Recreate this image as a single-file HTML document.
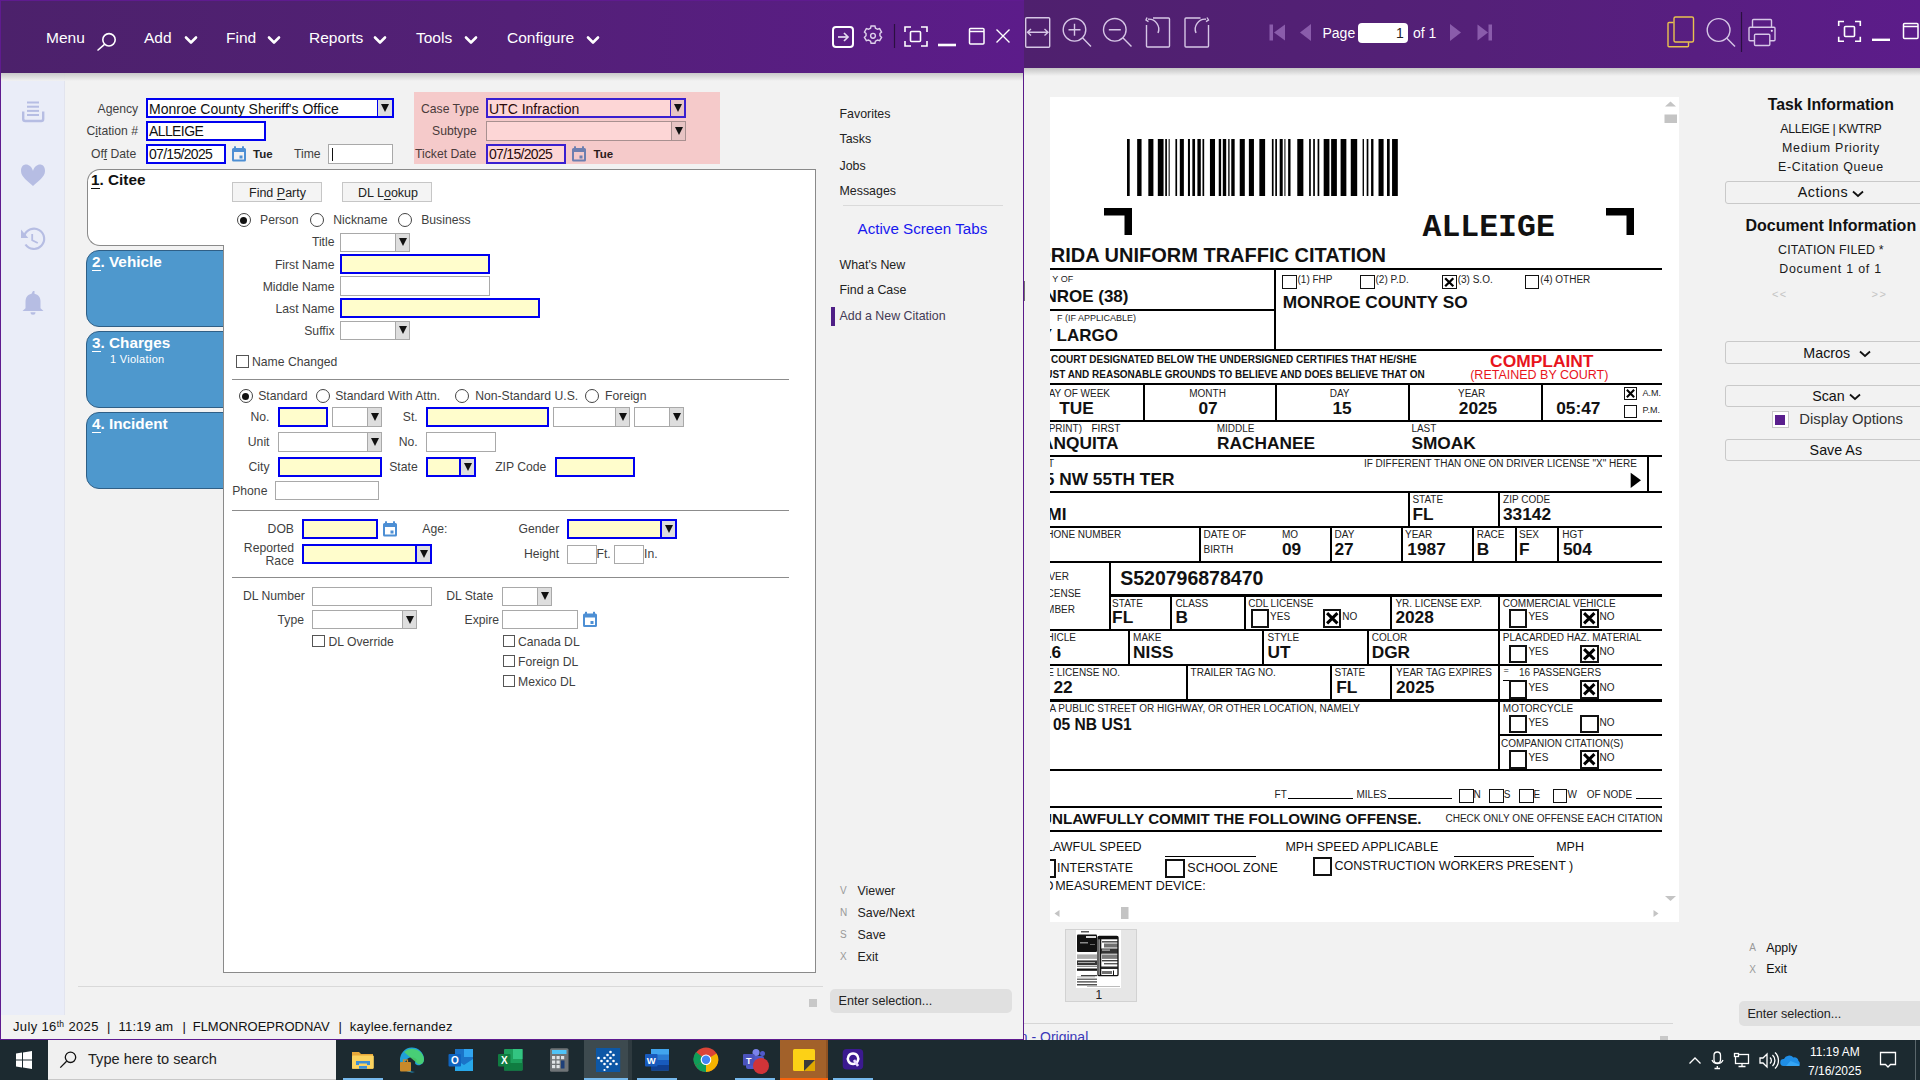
<!DOCTYPE html>
<html><head><meta charset="utf-8">
<style>
*{margin:0;padding:0;box-sizing:border-box}
html,body{width:1920px;height:1080px;overflow:hidden;background:#f2f2f2;font-family:"Liberation Sans",sans-serif}
.a{position:absolute}
.t{position:absolute;white-space:nowrap;line-height:1}
svg{position:absolute;overflow:visible}
/* header */
#lh{left:0;top:0;width:1024px;height:73px;background:linear-gradient(90deg,#4c216b 0%,#532077 50%,#5c1c8a 100%)}
#rh{left:1024px;top:0;width:896px;height:68px;background:linear-gradient(90deg,#4f206e 0%,#542078 50%,#5c1c8a 100%)}
.mi{color:#fff;font-size:15.5px}
.shadow{background:linear-gradient(#c4c4c4,#f2f2f2)}

.lbl{color:#3f3f3f;font-size:12.2px}
.inp{position:absolute;background:#fff;border:1px solid #a9a9a9}
.req{background:#fffdcc;border:2px solid #0000f0}
.blu{border:2px solid #0000f0}
.dd{position:absolute;top:0;bottom:0;right:0;width:14px;background:#dedede;border-left:1px solid #a9a9a9}
.dd::after{content:"";position:absolute;left:3px;top:50%;margin-top:-4px;border-left:4px solid transparent;border-right:4px solid transparent;border-top:8px solid #111}
.itx{position:absolute;left:1px;color:#111;font-size:14px;line-height:1}
.tab{position:absolute;left:86px;width:140px;height:77px;background:#4e98cd;border:1px solid #2f5f86;border-radius:13px 0 0 13px}
.tabt{position:absolute;left:5px;top:2.5px;color:#fff;font-size:15.3px;font-weight:bold;line-height:1}
.tabt u{text-decoration:none;border-bottom:1.2px solid currentColor}
.cb{position:absolute;width:13px;height:13px;border:1px solid #555;background:#fff}
.rd{position:absolute;width:14px;height:14px;border:1px solid #444;border-radius:50%;background:#fff}
.rd.on::after{content:"";position:absolute;left:2.5px;top:2.5px;width:7px;height:7px;border-radius:50%;background:#111}
.lk{color:#222;font-size:12.4px}
.btn{position:absolute;background:#f4f4f4;border:1px solid #c6c6c6}
.hr{position:absolute;height:1px;background:#8c8c8c}

.rbtn{position:absolute;left:1725px;width:200px;background:#f2f2f2;border:1px solid #c9c9c9;border-radius:3px}
.rp{color:#1a1a1a;font-size:12.4px}
</style></head><body>
<!-- LEFT WINDOW -->
<div class="a" id="lh"></div>
<div class="a" style="left:0;top:0;width:1px;height:1040px;background:#5f1b8f"></div>
<div class="a" style="left:0;top:0;width:1024px;height:1px;background:#5f1b8f"></div>
<div class="a" style="left:1023px;top:68px;width:1px;height:972px;background:#5a1b8a"></div>
<div class="a" style="left:0;top:1039px;width:1024px;height:1px;background:#5f1b8f"></div>

<!-- left body -->
<div class="a" style="left:1px;top:73px;width:64px;height:942px;background:#eaedf8;border-right:1px solid #e2e4ee"></div>
<div class="a shadow" style="left:1px;top:73px;width:1022px;height:8px;opacity:.9"></div>
<svg style="left:0;top:0" width="1" height="1">
<g fill="#b6bde3">
<rect x="27" y="101.5" width="12" height="2"/><rect x="27" y="105.7" width="12" height="2"/><rect x="27" y="109.9" width="12" height="2"/><rect x="27" y="114" width="12" height="2"/>
<path d="M33,171 C31,163 21,162 21,171 C21,177 28,181 33,186 C38,181 45,177 45,171 C45,162 35,163 33,171 Z"/>
<path d="M33,291 h1.5 v2.8 c4,0.8 6,3.6 6,8 v6.5 l3,2.6 h-21 l3,-2.6 v-6.5 c0,-4.4 2,-7.2 6,-8 z M30.5,312.2 h5 a2.5,2.5 0 0 1 -5,0 z"/>
<polygon points="21,229.5 28.3,238 21,238"/>
</g>
<g fill="none" stroke="#b6bde3">
<path d="M23.2,111.5 v7.5 a2,2 0 0 0 2,2 h16 a2,2 0 0 0 2,-2 v-7.5" stroke-width="2.4"/>
<path d="M24.3,235.5 A10.2,10.2 0 1 1 25.5,244.5" stroke-width="2.2"/>
<path d="M32.2,234 V240.2 L37.8,243" stroke-width="1.8"/>
</g>
</svg>

<!-- top form -->
<div class="t lbl" style="left:97.5px;top:102.5px">A<u style="text-decoration-thickness:1px">g</u>ency</div>
<div class="inp blu" style="left:146px;top:98px;width:248px;height:20px"><div class="itx" style="top:2px">Monroe County Sheriff's Office</div><div class="dd" style="border-left-color:#0000f0;width:15px"></div></div>
<div class="t lbl" style="left:86.5px;top:125px">C<u style="text-decoration-thickness:1px">i</u>tation #</div>
<div class="inp blu" style="left:146px;top:121px;width:120px;height:20px"><div class="itx" style="top:0.5px;letter-spacing:-0.6px">ALLEIGE</div></div>
<div class="t lbl" style="left:91px;top:148px">Of<u style="text-decoration-thickness:1px">f</u> Date</div>
<div class="inp blu" style="left:146px;top:144px;width:80px;height:20px"><div class="itx" style="top:0.5px;letter-spacing:-0.7px">07/15/2025</div></div>
<svg style="left:0;top:0" width="1" height="1"><g fill="#4d8fd4"><path d="M233.5,148 h11 a1.5,1.5 0 0 1 1.5,1.5 v10.5 a1.5,1.5 0 0 1 -1.5,1.5 h-11 a1.5,1.5 0 0 1 -1.5,-1.5 v-10.5 a1.5,1.5 0 0 1 1.5,-1.5 z M234,152 v7.5 h10 v-7.5 z"/><rect x="234" y="146.3" width="2" height="3"/><rect x="242" y="146.3" width="2" height="3"/><rect x="239.5" y="155.5" width="3" height="3"/></g>
</svg>
<div class="t" style="left:253px;top:148.5px;font-size:11.5px;font-weight:bold;color:#222">Tue</div>
<div class="t lbl" style="left:294px;top:148px">Time</div>
<div class="inp" style="left:328px;top:144px;width:65px;height:20px"><div class="a" style="left:3px;top:3px;width:1px;height:13px;background:#111"></div></div>

<div class="a" style="left:414px;top:92px;width:306px;height:72px;background:#f5caca"></div>
<div class="t lbl" style="left:421px;top:102.5px;color:#4a3a3a">Case Type</div>
<div class="inp" style="left:486px;top:98px;width:200px;height:20px;background:#fdd6d6;border:2px solid #3a1fd0"><div class="itx" style="top:2px;color:#2a0a0a">UTC Infraction</div><div class="dd" style="background:#e8c4c4;border-left-color:#3a1fd0"></div></div>
<div class="t lbl" style="left:432px;top:125px;color:#4a3a3a">Subtype</div>
<div class="inp" style="left:486px;top:121px;width:200px;height:20px;background:#fdd6d6;border-color:#a89090"><div class="dd" style="background:#e8c4c4;border-left-color:#a89090"></div></div>
<div class="t lbl" style="left:415px;top:148px;color:#4a3a3a">Ticket Date</div>
<div class="inp" style="left:486px;top:144px;width:80px;height:20px;background:#fdd6d6;border:2px solid #3a1fd0"><div class="itx" style="top:0.5px;color:#2a0a0a;letter-spacing:-0.7px">07/15/2025</div></div>
<svg style="left:0;top:0" width="1" height="1"><g fill="#6d7fb0"><path d="M573.5,148 h11 a1.5,1.5 0 0 1 1.5,1.5 v10.5 a1.5,1.5 0 0 1 -1.5,1.5 h-11 a1.5,1.5 0 0 1 -1.5,-1.5 v-10.5 a1.5,1.5 0 0 1 1.5,-1.5 z M574,152 v7.5 h10 v-7.5 z"/><rect x="574" y="146.3" width="2" height="3"/><rect x="582" y="146.3" width="2" height="3"/><rect x="579.5" y="155.5" width="3" height="3"/></g></svg>
<div class="t" style="left:593.5px;top:148.5px;font-size:11.5px;font-weight:bold;color:#2a1a1a">Tue</div>

<!-- tabs -->
<div class="tab" style="top:250px"><div class="tabt"><u>2</u>. Vehicle</div></div>
<div class="tab" style="top:331px"><div class="tabt"><u>3</u>. Charges</div><div class="t" style="left:23px;top:22px;color:#fff;font-size:11px;letter-spacing:0.3px">1 Violation</div></div>
<div class="tab" style="top:412px"><div class="tabt"><u>4</u>. Incident</div></div>
<div class="a" style="left:223px;top:169px;width:593px;height:804px;background:#fff;border:1px solid #8a8a8a"></div>
<div class="a" style="left:87px;top:169px;width:137px;height:77px;background:#fff;border:1px solid #8a8a8a;border-right:none;border-radius:13px 0 0 13px"></div>
<div class="tabt" style="position:absolute;left:91px;top:172px;color:#111"><u>1</u>. Citee</div>


<!-- citee form -->
<div class="btn" style="left:232px;top:182px;width:90px;height:20px"></div>
<div class="t" style="left:249px;top:186.5px;color:#222;font-size:12.5px">Find <u style="text-decoration-thickness:1px;text-underline-offset:2px">P</u>arty</div>
<div class="btn" style="left:342px;top:182px;width:90px;height:20px"></div>
<div class="t" style="left:358px;top:186.5px;color:#222;font-size:12.5px">DL L<u style="text-decoration-thickness:1px;text-underline-offset:2px">o</u>okup</div>
<div class="rd on" style="left:236.5px;top:213px"></div><div class="t lbl" style="left:260px;top:213.5px">Person</div>
<div class="rd" style="left:309.5px;top:213px"></div><div class="t lbl" style="left:333.3px;top:213.5px">Nickname</div>
<div class="rd" style="left:397.5px;top:213px"></div><div class="t lbl" style="left:421.2px;top:213.5px">Business</div>
<div class="t lbl" style="right:1585.5px;top:236px">Title</div>
<div class="inp" style="left:340px;top:232.5px;width:70px;height:19px"><div class="dd"></div></div>
<div class="t lbl" style="right:1585.5px;top:258.5px">First Name</div>
<div class="inp req" style="left:340px;top:254px;width:150px;height:20px"></div>
<div class="t lbl" style="right:1585.5px;top:280.5px">Middle Name</div>
<div class="inp" style="left:340px;top:276px;width:150px;height:20px"></div>
<div class="t lbl" style="right:1585.5px;top:302.5px">Last Name</div>
<div class="inp req" style="left:340px;top:298px;width:200px;height:20px"></div>
<div class="t lbl" style="right:1585.5px;top:324.5px">Suffix</div>
<div class="inp" style="left:340px;top:320.5px;width:70px;height:19px"><div class="dd"></div></div>
<div class="cb" style="left:236px;top:355px"></div><div class="t lbl" style="left:252px;top:356px">Name Changed</div>
<div class="hr" style="left:232px;top:379px;width:557px"></div>

<div class="rd on" style="left:238.5px;top:389.3px"></div><div class="t lbl" style="left:258.2px;top:389.8px">Standard</div>
<div class="rd" style="left:315.5px;top:389.3px"></div><div class="t lbl" style="left:335.2px;top:389.8px">Standard With Attn.</div>
<div class="rd" style="left:455px;top:389.3px"></div><div class="t lbl" style="left:475.2px;top:389.8px">Non-Standard U.S.</div>
<div class="rd" style="left:585.3px;top:389.3px"></div><div class="t lbl" style="left:605.1px;top:389.8px">Foreign</div>
<div class="t lbl" style="right:1650.5px;top:411px">No.</div>
<div class="inp req" style="left:278px;top:407px;width:50px;height:20px"></div>
<div class="inp" style="left:332px;top:407px;width:50px;height:20px"><div class="dd"></div></div>
<div class="t lbl" style="right:1502.3px;top:411px">St.</div>
<div class="inp req" style="left:426px;top:407px;width:123px;height:20px"></div>
<div class="inp" style="left:553px;top:407px;width:77px;height:20px"><div class="dd"></div></div>
<div class="inp" style="left:634px;top:407px;width:50px;height:20px"><div class="dd"></div></div>
<div class="t lbl" style="right:1650.5px;top:436px">Unit</div>
<div class="inp" style="left:278px;top:432px;width:104px;height:20px"><div class="dd"></div></div>
<div class="t lbl" style="right:1502.3px;top:436px">No.</div>
<div class="inp" style="left:426px;top:432px;width:70px;height:20px"></div>
<div class="t lbl" style="right:1650.5px;top:460.5px">City</div>
<div class="inp req" style="left:278px;top:456.5px;width:104px;height:20px"></div>
<div class="t lbl" style="right:1502.3px;top:460.5px">State</div>
<div class="inp req" style="left:426px;top:456.5px;width:50px;height:20px"><div class="dd" style="border-left:2px solid #0000f0;width:15px"></div></div>
<div class="t lbl" style="right:1373.6px;top:460.5px">ZIP Code</div>
<div class="inp req" style="left:555px;top:456.5px;width:80px;height:20px"></div>
<div class="t lbl" style="left:232.2px;top:484.5px">Phone</div>
<div class="inp" style="left:275px;top:480.5px;width:104px;height:19.5px"></div>
<div class="hr" style="left:232px;top:509.5px;width:557px"></div>

<div class="t lbl" style="right:1626px;top:523px">DOB</div>
<div class="inp req" style="left:302px;top:519px;width:76px;height:20px"></div>
<svg style="left:0;top:0" width="1" height="1"><g fill="#4d8fd4"><path d="M384.5,523 h11 a1.5,1.5 0 0 1 1.5,1.5 v10.5 a1.5,1.5 0 0 1 -1.5,1.5 h-11 a1.5,1.5 0 0 1 -1.5,-1.5 v-10.5 a1.5,1.5 0 0 1 1.5,-1.5 z M385,527 v7.5 h10 v-7.5 z"/><rect x="385" y="521.3" width="2" height="3"/><rect x="393" y="521.3" width="2" height="3"/><rect x="390.5" y="530.5" width="3" height="3"/></g>
<g fill="#4d8fd4"><path d="M584.5,613.5 h11 a1.5,1.5 0 0 1 1.5,1.5 v10.5 a1.5,1.5 0 0 1 -1.5,1.5 h-11 a1.5,1.5 0 0 1 -1.5,-1.5 v-10.5 a1.5,1.5 0 0 1 1.5,-1.5 z M585,617.5 v7.5 h10 v-7.5 z"/><rect x="585" y="611.8" width="2" height="3"/><rect x="593" y="611.8" width="2" height="3"/><rect x="590.5" y="621" width="3" height="3"/></g></svg>
<div class="t lbl" style="left:422.3px;top:523px">Age:</div>
<div class="t lbl" style="right:1360.8px;top:523px">Gender</div>
<div class="inp req" style="left:567px;top:519px;width:110px;height:20px"><div class="dd" style="border-left:2px solid #0000f0;width:15px"></div></div>
<div class="t lbl" style="right:1626px;top:541.5px">Reported</div>
<div class="t lbl" style="right:1626px;top:555.3px">Race</div>
<div class="inp req" style="left:302px;top:544px;width:130px;height:20px"><div class="dd" style="border-left:2px solid #0000f0;width:15px"></div></div>
<div class="t lbl" style="right:1360.8px;top:548px">Height</div>
<div class="inp" style="left:567px;top:544.5px;width:30px;height:19.5px"></div>
<div class="t lbl" style="left:596.5px;top:548px">Ft.</div>
<div class="inp" style="left:614px;top:544.5px;width:30px;height:19.5px"></div>
<div class="t lbl" style="left:644px;top:548px">In.</div>
<div class="hr" style="left:232px;top:576.5px;width:557px"></div>

<div class="t lbl" style="left:243px;top:590px">DL Number</div>
<div class="inp" style="left:312px;top:586.5px;width:120px;height:19px"></div>
<div class="t lbl" style="left:446.2px;top:590px">DL State</div>
<div class="inp" style="left:502px;top:586.5px;width:50px;height:19px"><div class="dd"></div></div>
<div class="t lbl" style="right:1616px;top:613.5px">Type</div>
<div class="inp" style="left:312px;top:610px;width:105px;height:19px"><div class="dd"></div></div>
<div class="t lbl" style="left:464.5px;top:613.5px">Expire</div>
<div class="inp" style="left:502px;top:610px;width:76px;height:19px"></div>
<div class="cb" style="left:312px;top:634.5px;width:12.5px;height:12.5px"></div><div class="t lbl" style="left:328.5px;top:635.5px">DL Override</div>
<div class="cb" style="left:502.5px;top:634.5px;width:12.5px;height:12.5px"></div><div class="t lbl" style="left:518px;top:635.5px">Canada DL</div>
<div class="cb" style="left:502.5px;top:654.5px;width:12.5px;height:12.5px"></div><div class="t lbl" style="left:518px;top:655.5px">Foreign DL</div>
<div class="cb" style="left:502.5px;top:674.5px;width:12.5px;height:12.5px"></div><div class="t lbl" style="left:518px;top:675.5px">Mexico DL</div>

<!-- right link panel -->
<div class="t lk" style="left:839.5px;top:107.5px">Favorites</div>
<div class="t lk" style="left:839.5px;top:133.2px">Tasks</div>
<div class="t lk" style="left:839.5px;top:159.5px">Jobs</div>
<div class="t lk" style="left:839.5px;top:185.3px">Messages</div>
<div class="a" style="left:843px;top:205px;width:160px;height:1px;background:#dadada"></div>
<div class="t" style="left:857.5px;top:220.5px;color:#1818ee;font-size:15.2px">Active Screen Tabs</div>
<div class="t lk" style="left:839.5px;top:258.5px">What's New</div>
<div class="t lk" style="left:839.5px;top:284.2px">Find a Case</div>
<div class="t lk" style="left:839.5px;top:310.2px;color:#443a55">Add a New Citation</div>
<div class="a" style="left:831px;top:307px;width:4px;height:19px;background:#4f1f86"></div>
<div class="t" style="left:840px;top:886px;color:#999;font-size:10px">V</div>
<div class="t" style="left:840px;top:908px;color:#999;font-size:10px">N</div>
<div class="t" style="left:840px;top:930px;color:#999;font-size:10px">S</div>
<div class="t" style="left:840px;top:952px;color:#999;font-size:10px">X</div>
<div class="t lk" style="left:857.5px;top:884.5px">Viewer</div>
<div class="t lk" style="left:857.5px;top:906.5px">Save/Next</div>
<div class="t lk" style="left:857.5px;top:928.5px">Save</div>
<div class="t lk" style="left:857.5px;top:950.5px">Exit</div>
<div class="a" style="left:830px;top:988.5px;width:182px;height:24.5px;background:#e0e0e0;border-radius:5px"></div>
<div class="t" style="left:838.5px;top:995px;color:#222;font-size:12.6px">Enter selection...</div>
<div class="a" style="left:809px;top:999px;width:8px;height:8px;background:#c8c8c8"></div>
<div class="a" style="left:78px;top:986px;width:745px;height:1px;background:#d9d9d9"></div>
<div class="t" style="left:13px;top:1019.5px;color:#111;font-size:13px;letter-spacing:0.35px">July 16<sup style="font-size:8.5px;vertical-align:4px">th</sup> 2025</div>
<div class="t" style="left:107px;top:1019.5px;color:#111;font-size:13px">|</div>
<div class="t" style="left:118.5px;top:1019.5px;color:#111;font-size:13px;letter-spacing:0.2px">11:19 am</div>
<div class="t" style="left:182.5px;top:1019.5px;color:#111;font-size:13px">|</div>
<div class="t" style="left:192.7px;top:1019.5px;color:#111;font-size:13px">FLMONROEPRODNAV</div>
<div class="t" style="left:338.5px;top:1019.5px;color:#111;font-size:13px">|</div>
<div class="t" style="left:349.7px;top:1019.5px;color:#111;font-size:13px;letter-spacing:0.25px">kaylee.fernandez</div>

<!-- RIGHT WINDOW -->
<div class="a" id="rh"></div>
<div class="a shadow" style="left:1024px;top:68px;width:896px;height:8px"></div>


<!-- left header content -->
<div class="t mi" style="left:46px;top:30px">Menu</div>
<svg style="left:0;top:0" width="1" height="1"><g fill="none" stroke="#fff" stroke-width="1.6"><circle cx="109" cy="39.8" r="6.2"/><line x1="104.5" y1="44.3" x2="97.5" y2="50.5"/></g></svg>
<div class="t mi" style="left:144px;top:30px">Add</div>
<div class="t mi" style="left:226px;top:30px">Find</div>
<div class="t mi" style="left:309px;top:30px">Reports</div>
<div class="t mi" style="left:416px;top:30px">Tools</div>
<div class="t mi" style="left:507px;top:30px">Configure</div>
<svg style="left:0;top:0" width="1" height="1"><g fill="none" stroke="#fff" stroke-width="2.6" stroke-linecap="round" stroke-linejoin="round">
<polyline points="186,37.5 191,42.5 196,37.5"/>
<polyline points="269,37.5 274,42.5 279,37.5"/>
<polyline points="375,37.5 380,42.5 385,37.5"/>
<polyline points="466,37.5 471,42.5 476,37.5"/>
<polyline points="588,37.5 593,42.5 598,37.5"/>
</g>
<g fill="none" stroke="#fff" stroke-width="2">
<rect x="833" y="27" width="20" height="20" rx="3"/>
<g stroke="#e6dcf0" stroke-width="1.7"><polyline points="838,37 848,37"/><polyline points="844,33 848,37 844,41"/></g>
<path d="M911,27 h-6 v5 M921,27 h6 v5 M911,46 h-6 v-5 M921,46 h6 v-5" stroke-width="1.6"/>
<rect x="910.5" y="31.5" width="10" height="10" rx="1" stroke-width="1.6"/>
<line x1="938" y1="45" x2="956" y2="45" stroke-width="2.6"/>
<rect x="969.5" y="28.5" width="14.5" height="15.5" rx="1" stroke-width="1.5"/>
<line x1="970" y1="31.5" x2="984" y2="31.5" stroke-width="1.5"/>
<path d="M996.5,29.5 L1009.5,42.5 M1009.5,29.5 L996.5,42.5" stroke-width="1.4"/>
</g>
<g fill="none" stroke="#ddd0ea" stroke-width="1.4">
<circle cx="873" cy="35.8" r="2.4"/>
<g transform="translate(873,34.5) scale(0.8) translate(-873,-36)"><path d="M870.6,26.9 L875.4,26.9 L876.1,29.6 L878.6,31 L881.3,30.2 L883.7,34.4 L881.7,36.3 L881.7,39.1 L883.7,41 L881.3,45.2 L878.6,44.4 L876.1,45.8 L875.4,48.5 L870.6,48.5 L869.9,45.8 L867.4,44.4 L864.7,45.2 L862.3,41 L864.3,39.1 L864.3,36.3 L862.3,34.4 L864.7,30.2 L867.4,31 L869.9,29.6 Z" transform="translate(0,-1.5)" stroke-width="1.8"/></g>
</g>
<line x1="894.5" y1="24" x2="894.5" y2="48" stroke="#2a1040" stroke-width="1.2"/>
</svg>
<!-- right header content -->
<svg style="left:0;top:0" width="1" height="1">
<g fill="none" stroke="#d6c6e6" stroke-width="1.4">
<rect x="1025.7" y="17.7" width="24" height="29.6" rx="1"/>
<path d="M1027.5,32.2 H1048 M1031,29 L1027.5,32.2 L1031,35.4 M1044.5,29 L1048,32.2 L1044.5,35.4"/>
<circle cx="1074.5" cy="29.8" r="11.3"/><path d="M1082.5,37.8 L1091,46.5 M1068.5,29.8 H1080.5 M1074.5,23.8 V35.8"/>
<circle cx="1114.8" cy="29.8" r="11.3"/><path d="M1122.8,37.8 L1131.5,46.5 M1108.8,29.8 H1120.8"/>
<path d="M1153,18 H1168.5 a1,1 0 0 1 1,1 V46 a1,1 0 0 1 -1,1 H1147.5 a1,1 0 0 1 -1,-1 V25 M1158,33 a10,10 0 0 0 -10,-13.8 M1147,17.5 L1146,20 L1148.5,21.7"/>
<path d="M1200.5,18 H1186 a1,1 0 0 0 -1,1 V46 a1,1 0 0 0 1,1 H1207.5 a1,1 0 0 0 1,-1 V25 M1196,33 a10,10 0 0 1 10,-13.8 M1207,17.5 L1208.5,20 L1206,21.7"/>
</g>
<g fill="#8a5cab">
<rect x="1269.5" y="24.5" width="3.5" height="16"/><polygon points="1274,32.5 1285,24.5 1285,40.5"/>
<polygon points="1300,32.5 1311,24 1311,41"/>
<polygon points="1461,32.5 1450,24 1450,41"/>
<polygon points="1488,32.5 1477.5,24.5 1477.5,40.5"/><rect x="1488.5" y="24.5" width="3.5" height="16"/>
</g>
<g fill="none" stroke="#e9c24f" stroke-width="1.4">
<rect x="1674" y="17" width="19.5" height="25" rx="1.5"/>
<path d="M1673.5,22.5 H1669 a1,1 0 0 0 -1,1 V45.8 a1,1 0 0 0 1,1 H1687.5 a1,1 0 0 0 1,-1 V42.2"/>
</g>
<g fill="none" stroke="#d6c6e6" stroke-width="1.4">
<circle cx="1718.6" cy="30" r="11.4"/><path d="M1726.6,38 L1735,46.5"/>
<path d="M1752.5,27.3 V20.5 a1,1 0 0 1 1,-1 H1770.5 a1,1 0 0 1 1,1 V27.3 M1754.5,40.8 H1750 a1,1 0 0 1 -1,-1 V28.3 a1,1 0 0 1 1,-1 H1774 a1,1 0 0 1 1,1 V39.8 a1,1 0 0 1 -1,1 H1769.8"/>
<rect x="1754.5" y="34.3" width="15.3" height="11.2" rx="1"/>
</g>
<circle cx="1771.8" cy="30.8" r="1.1" fill="#e8dcf2"/>
<line x1="1741.5" y1="12" x2="1741.5" y2="52" stroke="#2a1040" stroke-width="1.2"/>
<g fill="none" stroke="#fff" stroke-width="1.6">
<path d="M1844,21.5 h-5.3 v4.5 M1855,21.5 h5.3 v4.5 M1844,41.3 h-5.3 v-4.5 M1855,41.3 h5.3 v-4.5"/>
<rect x="1844.5" y="26.5" width="10" height="10" rx="1"/>
<line x1="1872" y1="39.8" x2="1890" y2="39.8" stroke-width="2.4"/>
<rect x="1903.5" y="23.5" width="14.5" height="15" rx="1" stroke-width="1.5"/>
<line x1="1904" y1="26.5" x2="1918" y2="26.5" stroke-width="1.5"/>
</g>
</svg>
<div class="t" style="left:1322.5px;top:26px;color:#fff;font-size:14px">Page</div>
<div class="a" style="left:1358px;top:23px;width:50px;height:20px;background:#fff;border-radius:4px"></div>
<div class="t" style="left:1396px;top:26px;color:#222;font-size:14px">1</div>
<div class="t" style="left:1413px;top:26px;color:#fff;font-size:14px">of 1</div>


<!-- right body -->
<div class="a" style="left:1024px;top:281px;width:1px;height:20px;background:#3a3a3a;opacity:.7"></div>
<div class="a" style="left:1050px;top:97px;width:629px;height:825px;background:#fff;overflow:hidden">
<div class="a" style="left:-1050px;top:-97px;width:1920px;height:1080px">
<!--DOC-->
<svg style="left:0;top:0" width="1" height="1"><g fill="#000"><rect x="1127.00" y="139" width="2.71" height="57"/><rect x="1137.16" y="139" width="4.40" height="57"/><rect x="1148.33" y="139" width="5.08" height="57"/><rect x="1157.81" y="139" width="5.75" height="57"/><rect x="1165.25" y="139" width="1.69" height="57"/><rect x="1168.64" y="139" width="1.02" height="57"/><rect x="1175.41" y="139" width="1.69" height="57"/><rect x="1179.81" y="139" width="4.06" height="57"/><rect x="1187.94" y="139" width="2.03" height="57"/><rect x="1192.34" y="139" width="2.71" height="57"/><rect x="1197.41" y="139" width="3.39" height="57"/><rect x="1202.49" y="139" width="1.69" height="57"/><rect x="1209.94" y="139" width="5.08" height="57"/><rect x="1218.74" y="139" width="2.37" height="57"/><rect x="1222.80" y="139" width="3.39" height="57"/><rect x="1228.22" y="139" width="1.35" height="57"/><rect x="1231.27" y="139" width="3.39" height="57"/><rect x="1239.73" y="139" width="5.08" height="57"/><rect x="1248.87" y="139" width="5.08" height="57"/><rect x="1259.36" y="139" width="5.75" height="57"/><rect x="1271.89" y="139" width="1.69" height="57"/><rect x="1275.27" y="139" width="1.69" height="57"/><rect x="1279.68" y="139" width="3.05" height="57"/><rect x="1284.41" y="139" width="1.02" height="57"/><rect x="1288.14" y="139" width="2.37" height="57"/><rect x="1297.28" y="139" width="6.09" height="57"/><rect x="1309.13" y="139" width="1.69" height="57"/><rect x="1313.19" y="139" width="1.69" height="57"/><rect x="1317.59" y="139" width="1.69" height="57"/><rect x="1323.68" y="139" width="5.75" height="57"/><rect x="1331.13" y="139" width="5.75" height="57"/><rect x="1340.61" y="139" width="5.75" height="57"/><rect x="1350.77" y="139" width="6.43" height="57"/><rect x="1362.61" y="139" width="1.35" height="57"/><rect x="1366.68" y="139" width="1.69" height="57"/><rect x="1371.08" y="139" width="2.37" height="57"/><rect x="1378.52" y="139" width="5.08" height="57"/><rect x="1386.99" y="139" width="2.71" height="57"/><rect x="1392.06" y="139" width="5.75" height="57"/></g></svg>
<svg style="left:0;top:0" width="1" height="1"><g fill="#000"><path d="M1104,208 h28 v27 h-7.5 v-19.5 h-20.5 z"/><path d="M1606,208 h28 v27 h-7.5 v-19.5 h-20.5 z"/></g></svg>
<div class="t" style="left:1422.5px;top:212.3px;font-size:31.5px;font-weight:bold;color:#111;font-family:'Liberation Mono',monospace">ALLEIGE</div>
<div class="t" style="right:534.0px;top:245.1px;font-size:20px;font-weight:bold;color:#111;">FLORIDA UNIFORM TRAFFIC CITATION</div>
<div class="a" style="left:1050px;top:267.9px;width:612px;height:2.2px;background:#000"></div>
<div class="a" style="left:1274.4px;top:269px;width:2px;height:81px;background:#000"></div>
<div class="t" style="right:846.8px;top:274.5px;font-size:9px;color:#222;">Y OF</div>
<div class="t" style="right:791.5px;top:287.7px;font-size:17px;font-weight:bold;color:#111;">MONROE (38)</div>
<div class="a" style="left:1050px;top:308.8px;width:225px;height:2px;background:#000"></div>
<div class="t" style="right:784.0px;top:313.6px;font-size:9px;color:#222;">F (IF APPLICABLE)</div>
<div class="t" style="right:802.0px;top:327.0px;font-size:17px;font-weight:bold;color:#111;">Y LARGO</div>
<div class="a" style="left:1050px;top:348.7px;width:612px;height:2.2px;background:#000"></div>
<div class="a" style="left:1282px;top:274.5px;width:14.5px;height:14.5px;border:1.5px solid #111"></div>
<div class="t" style="left:1297.5px;top:275.3px;font-size:10px;color:#222;">(1) FHP</div>
<div class="a" style="left:1360px;top:274.5px;width:14.5px;height:14.5px;border:1.5px solid #111"></div>
<div class="t" style="left:1375.5px;top:275.3px;font-size:10px;color:#222;">(2) P.D.</div>
<div class="a" style="left:1442.2px;top:274.5px;width:14.5px;height:14.5px;border:1.5px solid #111"></div>
<svg style="left:1442.2px;top:274.5px" width="14.5" height="14.5"><path d="M3.1899999999999995,3.1899999999999995 L11.31,11.31 M11.31,3.1899999999999995 L3.1899999999999995,11.31" stroke="#000" stroke-width="2.3"/></svg>
<div class="t" style="left:1457.7px;top:275.3px;font-size:10px;color:#222;">(3) S.O.</div>
<div class="a" style="left:1524.8px;top:274.5px;width:14.5px;height:14.5px;border:1.5px solid #111"></div>
<div class="t" style="left:1540.3px;top:275.3px;font-size:10px;color:#222;">(4) OTHER</div>
<div class="t" style="left:1282.7px;top:293.5px;font-size:17.3px;font-weight:bold;color:#111;">MONROE COUNTY SO</div>
<div class="t" style="left:1050.8px;top:353.9px;font-size:10.7px;font-weight:bold;color:#111;transform:scaleX(0.934);transform-origin:0 0">COURT DESIGNATED BELOW THE UNDERSIGNED CERTIFIES THAT HE/SHE</div>
<div class="t" style="right:495.8px;top:369.2px;font-size:10.7px;font-weight:bold;color:#111;transform:scaleX(0.934);transform-origin:100% 0">HAS JUST AND REASONABLE GROUNDS TO BELIEVE AND DOES BELIEVE THAT ON</div>
<div class="t" style="left:1541.8px;transform:translateX(-50%);top:352.6px;font-size:17.4px;font-weight:bold;color:#e8141c;">COMPLAINT</div>
<div class="t" style="left:1539.3px;transform:translateX(-50%);top:369.0px;font-size:12.5px;color:#e8141c;">(RETAINED BY COURT)</div>
<div class="a" style="left:1050px;top:382.9px;width:612px;height:2.2px;background:#000"></div>
<div class="a" style="left:1143.0px;top:384px;width:2px;height:37px;background:#000"></div>
<div class="a" style="left:1275.0px;top:384px;width:2px;height:37px;background:#000"></div>
<div class="a" style="left:1408.0px;top:384px;width:2px;height:37px;background:#000"></div>
<div class="a" style="left:1541.0px;top:384px;width:2px;height:37px;background:#000"></div>
<div class="t" style="right:810.0px;top:388.6px;font-size:10px;color:#222;">DAY OF WEEK</div>
<div class="t" style="left:1207.6px;transform:translateX(-50%);top:388.6px;font-size:10px;color:#222;">MONTH</div>
<div class="t" style="left:1339.6px;transform:translateX(-50%);top:388.6px;font-size:10px;color:#222;">DAY</div>
<div class="t" style="left:1471.6px;transform:translateX(-50%);top:388.6px;font-size:10px;color:#222;">YEAR</div>
<div class="t" style="left:1059.3px;top:400.0px;font-size:17.3px;font-weight:bold;color:#111;">TUE</div>
<div class="t" style="left:1208.0px;transform:translateX(-50%);top:400.0px;font-size:17.3px;font-weight:bold;color:#111;">07</div>
<div class="t" style="left:1342.0px;transform:translateX(-50%);top:400.0px;font-size:17.3px;font-weight:bold;color:#111;">15</div>
<div class="t" style="left:1478.0px;transform:translateX(-50%);top:400.0px;font-size:17.3px;font-weight:bold;color:#111;">2025</div>
<div class="t" style="left:1556.2px;top:400.0px;font-size:17.3px;font-weight:bold;color:#111;">05:47</div>
<div class="a" style="left:1624px;top:387.4px;width:13px;height:13px;border:1.3px solid #111"></div>
<svg style="left:1624px;top:387.4px" width="13" height="13"><path d="M2.8599999999999994,2.8599999999999994 L10.14,10.14 M10.14,2.8599999999999994 L2.8599999999999994,10.14" stroke="#000" stroke-width="2.1"/></svg>
<div class="a" style="left:1624px;top:405px;width:13px;height:13px;border:1.3px solid #111"></div>
<div class="t" style="left:1642.6px;top:388.9px;font-size:9px;color:#222;">A.M.</div>
<div class="t" style="left:1642.6px;top:406.4px;font-size:9px;color:#222;">P.M.</div>
<div class="a" style="left:1050px;top:419.5px;width:612px;height:2.2px;background:#000"></div>
<div class="t" style="right:838.0px;top:424.1px;font-size:10px;color:#222;">NAME (PRINT)</div>
<div class="t" style="left:1091.5px;top:424.1px;font-size:10px;color:#111;">FIRST</div>
<div class="t" style="left:1216.7px;top:424.1px;font-size:10px;color:#222;">MIDDLE</div>
<div class="t" style="left:1411.4px;top:424.1px;font-size:10px;color:#222;">LAST</div>
<div class="t" style="right:801.5px;top:435.2px;font-size:17.3px;font-weight:bold;color:#111;">SHANQUITA</div>
<div class="t" style="left:1217.0px;top:435.2px;font-size:17.3px;font-weight:bold;color:#111;">RACHANEE</div>
<div class="t" style="left:1411.4px;top:435.2px;font-size:17.3px;font-weight:bold;color:#111;">SMOAK</div>
<div class="a" style="left:1050px;top:455.0px;width:612px;height:2.2px;background:#000"></div>
<div class="t" style="right:866.0px;top:459.0px;font-size:10px;color:#222;">STREET</div>
<div class="t" style="right:283.2px;top:459.0px;font-size:10px;color:#222;">IF DIFFERENT THAN ONE ON DRIVER LICENSE "X" HERE</div>
<svg style="left:0;top:0" width="1" height="1"><polygon points="1630.7,472.7 1641,480.3 1630.7,488" fill="#000"/></svg>
<div class="a" style="left:1647.3px;top:456px;width:2px;height:36px;background:#000"></div>
<div class="t" style="right:745.6px;top:470.7px;font-size:17.3px;font-weight:bold;color:#111;">12345 NW 55TH TER</div>
<div class="a" style="left:1050px;top:491.2px;width:612px;height:2.2px;background:#000"></div>
<div class="a" style="left:1408.0px;top:492px;width:2px;height:35px;background:#000"></div>
<div class="a" style="left:1498.4px;top:492px;width:2px;height:35px;background:#000"></div>
<div class="t" style="left:1412.4px;top:494.5px;font-size:10px;color:#222;">STATE</div>
<div class="t" style="left:1503.1px;top:494.5px;font-size:10px;color:#222;">ZIP CODE</div>
<div class="t" style="right:853.5px;top:506.2px;font-size:17.3px;font-weight:bold;color:#111;">MIAMI</div>
<div class="t" style="left:1412.4px;top:506.2px;font-size:17.3px;font-weight:bold;color:#111;">FL</div>
<div class="t" style="left:1503.0px;top:506.2px;font-size:17.3px;font-weight:bold;color:#111;">33142</div>
<div class="a" style="left:1050px;top:525.8px;width:612px;height:2.2px;background:#000"></div>
<div class="a" style="left:1199.1px;top:527px;width:2px;height:35px;background:#000"></div>
<div class="a" style="left:1329.5px;top:527px;width:2px;height:35px;background:#000"></div>
<div class="a" style="left:1400.5px;top:527px;width:2px;height:35px;background:#000"></div>
<div class="a" style="left:1471.6px;top:527px;width:2px;height:35px;background:#000"></div>
<div class="a" style="left:1514.6px;top:527px;width:2px;height:35px;background:#000"></div>
<div class="a" style="left:1557.0px;top:527px;width:2px;height:35px;background:#000"></div>
<div class="t" style="right:798.8px;top:530.1px;font-size:10px;color:#222;">PHONE NUMBER</div>
<div class="t" style="left:1203.5px;top:530.1px;font-size:10px;color:#222;">DATE OF</div>
<div class="t" style="left:1203.5px;top:545.3px;font-size:10px;color:#222;">BIRTH</div>
<div class="t" style="left:1282.0px;top:530.1px;font-size:10px;color:#222;">MO</div>
<div class="t" style="left:1334.5px;top:530.1px;font-size:10px;color:#222;">DAY</div>
<div class="t" style="left:1405.0px;top:530.1px;font-size:10px;color:#222;">YEAR</div>
<div class="t" style="left:1476.7px;top:530.1px;font-size:10px;color:#222;">RACE</div>
<div class="t" style="left:1519.0px;top:530.1px;font-size:10px;color:#222;">SEX</div>
<div class="t" style="left:1562.3px;top:530.1px;font-size:10px;color:#222;">HGT</div>
<div class="t" style="left:1282.0px;top:541.1px;font-size:17.3px;font-weight:bold;color:#111;">09</div>
<div class="t" style="left:1334.5px;top:541.1px;font-size:17.3px;font-weight:bold;color:#111;">27</div>
<div class="t" style="left:1407.3px;top:541.1px;font-size:17.3px;font-weight:bold;color:#111;">1987</div>
<div class="t" style="left:1476.7px;top:541.1px;font-size:17.3px;font-weight:bold;color:#111;">B</div>
<div class="t" style="left:1519.0px;top:541.1px;font-size:17.3px;font-weight:bold;color:#111;">F</div>
<div class="t" style="left:1563.0px;top:541.1px;font-size:17.3px;font-weight:bold;color:#111;">504</div>
<div class="a" style="left:1050px;top:560.6px;width:612px;height:2.2px;background:#000"></div>
<div class="a" style="left:1109.0px;top:562px;width:2px;height:68px;background:#000"></div>
<div class="t" style="right:851.0px;top:571.7px;font-size:10px;color:#222;">DRIVER</div>
<div class="t" style="right:839.0px;top:588.6px;font-size:10px;color:#222;">LICENSE</div>
<div class="t" style="right:845.0px;top:605.2px;font-size:10px;color:#222;">NUMBER</div>
<div class="t" style="left:1120.2px;top:568.6px;font-size:19.5px;font-weight:bold;color:#111;">S520796878470</div>
<div class="a" style="left:1110px;top:594.4px;width:552px;height:2.2px;background:#000"></div>
<div class="a" style="left:1170.3px;top:595px;width:2px;height:35px;background:#000"></div>
<div class="a" style="left:1243.8px;top:595px;width:2px;height:35px;background:#000"></div>
<div class="a" style="left:1390.4px;top:595px;width:2px;height:35px;background:#000"></div>
<div class="a" style="left:1497.7px;top:595px;width:2px;height:35px;background:#000"></div>
<div class="t" style="left:1112.1px;top:599.4px;font-size:10px;color:#222;">STATE</div>
<div class="t" style="left:1175.4px;top:599.4px;font-size:10px;color:#222;">CLASS</div>
<div class="t" style="left:1248.2px;top:599.4px;font-size:10px;color:#222;">CDL LICENSE</div>
<div class="t" style="left:1395.4px;top:599.4px;font-size:10px;color:#222;">YR. LICENSE EXP.</div>
<div class="t" style="left:1502.8px;top:599.4px;font-size:10px;color:#222;">COMMERCIAL VEHICLE</div>
<div class="t" style="left:1112.1px;top:608.8px;font-size:17.3px;font-weight:bold;color:#111;">FL</div>
<div class="t" style="left:1175.4px;top:608.8px;font-size:17.3px;font-weight:bold;color:#111;">B</div>
<div class="t" style="left:1395.4px;top:608.8px;font-size:17.3px;font-weight:bold;color:#111;">2028</div>
<div class="a" style="left:1250.6px;top:609px;width:18.5px;height:18.5px;border:2px solid #111"></div>
<div class="t" style="left:1270.1px;top:611.8px;font-size:10px;color:#222;">YES</div>
<div class="a" style="left:1322.7px;top:609px;width:18.5px;height:18.5px;border:2px solid #111"></div>
<svg style="left:1322.7px;top:609px" width="18.5" height="18.5"><path d="M4.069999999999999,4.069999999999999 L14.43,14.43 M14.43,4.069999999999999 L4.069999999999999,14.43" stroke="#000" stroke-width="3.0"/></svg>
<div class="t" style="left:1342.2px;top:611.8px;font-size:10px;color:#222;">NO</div>
<div class="a" style="left:1508.9px;top:609px;width:18.5px;height:18.5px;border:2px solid #111"></div>
<div class="t" style="left:1528.4px;top:611.8px;font-size:10px;color:#222;">YES</div>
<div class="a" style="left:1580px;top:609px;width:18.5px;height:18.5px;border:2px solid #111"></div>
<svg style="left:1580px;top:609px" width="18.5" height="18.5"><path d="M4.069999999999999,4.069999999999999 L14.43,14.43 M14.43,4.069999999999999 L4.069999999999999,14.43" stroke="#000" stroke-width="3.0"/></svg>
<div class="t" style="left:1599.5px;top:611.8px;font-size:10px;color:#222;">NO</div>
<div class="a" style="left:1050px;top:629.0px;width:612px;height:2.2px;background:#000"></div>
<div class="a" style="left:1127.7px;top:630px;width:2px;height:35px;background:#000"></div>
<div class="a" style="left:1262.4px;top:630px;width:2px;height:35px;background:#000"></div>
<div class="a" style="left:1366.7px;top:630px;width:2px;height:35px;background:#000"></div>
<div class="a" style="left:1497.7px;top:630px;width:2px;height:140px;background:#000"></div>
<div class="t" style="right:844.0px;top:632.6px;font-size:10px;color:#222;">VEHICLE</div>
<div class="t" style="left:1133.1px;top:632.6px;font-size:10px;color:#222;">MAKE</div>
<div class="t" style="left:1267.5px;top:632.6px;font-size:10px;color:#222;">STYLE</div>
<div class="t" style="left:1371.7px;top:632.6px;font-size:10px;color:#222;">COLOR</div>
<div class="t" style="left:1502.8px;top:632.6px;font-size:10px;color:#222;">PLACARDED HAZ. MATERIAL</div>
<div class="t" style="right:859.0px;top:644.3px;font-size:17.3px;font-weight:bold;color:#111;">2016</div>
<div class="t" style="left:1133.1px;top:644.3px;font-size:17.3px;font-weight:bold;color:#111;">NISS</div>
<div class="t" style="left:1267.5px;top:644.3px;font-size:17.3px;font-weight:bold;color:#111;">UT</div>
<div class="t" style="left:1371.7px;top:644.3px;font-size:17.3px;font-weight:bold;color:#111;">DGR</div>
<div class="a" style="left:1508.9px;top:644.6px;width:18.5px;height:18.5px;border:2px solid #111"></div>
<div class="t" style="left:1528.4px;top:647.4px;font-size:10px;color:#222;">YES</div>
<div class="a" style="left:1580px;top:644.6px;width:18.5px;height:18.5px;border:2px solid #111"></div>
<svg style="left:1580px;top:644.6px" width="18.5" height="18.5"><path d="M4.069999999999999,4.069999999999999 L14.43,14.43 M14.43,4.069999999999999 L4.069999999999999,14.43" stroke="#000" stroke-width="3.0"/></svg>
<div class="t" style="left:1599.5px;top:647.4px;font-size:10px;color:#222;">NO</div>
<div class="a" style="left:1050px;top:663.9px;width:612px;height:2.2px;background:#000"></div>
<div class="a" style="left:1186.3px;top:665px;width:2px;height:36px;background:#000"></div>
<div class="a" style="left:1329.5px;top:665px;width:2px;height:36px;background:#000"></div>
<div class="a" style="left:1390.4px;top:665px;width:2px;height:36px;background:#000"></div>
<div class="t" style="right:800.0px;top:668.1px;font-size:10px;color:#222;">VEHICLE LICENSE NO.</div>
<div class="t" style="left:1190.6px;top:668.1px;font-size:10px;color:#222;">TRAILER TAG NO.</div>
<div class="t" style="left:1334.5px;top:668.1px;font-size:10px;color:#222;">STATE</div>
<div class="t" style="left:1396.1px;top:668.1px;font-size:10px;color:#222;">YEAR TAG EXPIRES</div>
<div class="t" style="left:1519.0px;top:668.1px;font-size:10px;color:#222;">16 PASSENGERS</div>
<div class="t" style="left:1503.5px;top:665.9px;font-size:9px;color:#222;">=</div>
<div class="a" style="left:1503px;top:679.9px;width:14px;height:1.3px;background:#000"></div>
<div class="t" style="left:1053.5px;top:679.2px;font-size:17.3px;font-weight:bold;color:#111;">22</div>
<div class="t" style="left:1336.2px;top:679.2px;font-size:17.3px;font-weight:bold;color:#111;">FL</div>
<div class="t" style="left:1396.0px;top:679.2px;font-size:17.3px;font-weight:bold;color:#111;">2025</div>
<div class="a" style="left:1508.9px;top:680.2px;width:18.5px;height:18.5px;border:2px solid #111"></div>
<div class="t" style="left:1528.4px;top:683.0px;font-size:10px;color:#222;">YES</div>
<div class="a" style="left:1580px;top:680.2px;width:18.5px;height:18.5px;border:2px solid #111"></div>
<svg style="left:1580px;top:680.2px" width="18.5" height="18.5"><path d="M4.069999999999999,4.069999999999999 L14.43,14.43 M14.43,4.069999999999999 L4.069999999999999,14.43" stroke="#000" stroke-width="3.0"/></svg>
<div class="t" style="left:1599.5px;top:683.0px;font-size:10px;color:#222;">NO</div>
<div class="a" style="left:1050px;top:699.4px;width:612px;height:2.2px;background:#000"></div>
<div class="t" style="right:560.1px;top:703.7px;font-size:10px;color:#222;">UPON A PUBLIC STREET OR HIGHWAY, OR OTHER LOCATION, NAMELY</div>
<div class="t" style="left:1052.9px;top:717.3px;font-size:15.6px;font-weight:bold;color:#111;">05 NB US1</div>
<div class="t" style="left:1502.8px;top:703.7px;font-size:10px;color:#222;">MOTORCYCLE</div>
<div class="a" style="left:1508.9px;top:714.7px;width:18.5px;height:18.5px;border:2px solid #111"></div>
<div class="t" style="left:1528.4px;top:717.5px;font-size:10px;color:#222;">YES</div>
<div class="a" style="left:1580px;top:714.7px;width:18.5px;height:18.5px;border:2px solid #111"></div>
<div class="t" style="left:1599.5px;top:717.5px;font-size:10px;color:#222;">NO</div>
<div class="a" style="left:1498.7px;top:734.3px;width:163.29999999999995px;height:2.2px;background:#000"></div>
<div class="t" style="left:1501.0px;top:738.8px;font-size:10px;color:#222;">COMPANION CITATION(S)</div>
<div class="a" style="left:1508.9px;top:750.2px;width:18.5px;height:18.5px;border:2px solid #111"></div>
<div class="t" style="left:1528.4px;top:753.0px;font-size:10px;color:#222;">YES</div>
<div class="a" style="left:1580px;top:750.2px;width:18.5px;height:18.5px;border:2px solid #111"></div>
<svg style="left:1580px;top:750.2px" width="18.5" height="18.5"><path d="M4.069999999999999,4.069999999999999 L14.43,14.43 M14.43,4.069999999999999 L4.069999999999999,14.43" stroke="#000" stroke-width="3.0"/></svg>
<div class="t" style="left:1599.5px;top:753.0px;font-size:10px;color:#222;">NO</div>
<div class="a" style="left:1050px;top:768.8px;width:612px;height:2.2px;background:#000"></div>
<div class="t" style="left:1274.6px;top:789.8px;font-size:10px;color:#222;">FT</div>
<div class="a" style="left:1288px;top:798.1px;width:65px;height:1px;background:#000"></div>
<div class="t" style="left:1356.5px;top:789.8px;font-size:10px;color:#222;">MILES</div>
<div class="a" style="left:1388px;top:798.1px;width:64px;height:1px;background:#000"></div>
<div class="a" style="left:1459px;top:788.6px;width:14.5px;height:14.5px;border:1.8px solid #111"></div>
<div class="t" style="left:1473.5px;top:789.8px;font-size:10px;color:#222;">N</div>
<div class="a" style="left:1489.2px;top:788.6px;width:14.5px;height:14.5px;border:1.8px solid #111"></div>
<div class="t" style="left:1503.7px;top:789.8px;font-size:10px;color:#222;">S</div>
<div class="a" style="left:1519px;top:788.6px;width:14.5px;height:14.5px;border:1.8px solid #111"></div>
<div class="t" style="left:1533.5px;top:789.8px;font-size:10px;color:#222;">E</div>
<div class="a" style="left:1552.9px;top:788.6px;width:14.5px;height:14.5px;border:1.8px solid #111"></div>
<div class="t" style="left:1567.4px;top:789.8px;font-size:10px;color:#222;">W</div>
<div class="t" style="left:1586.7px;top:789.8px;font-size:10px;color:#222;">OF NODE</div>
<div class="a" style="left:1636px;top:798.1px;width:26px;height:1px;background:#000"></div>
<div class="a" style="left:1050px;top:805.5px;width:612px;height:2.2px;background:#000"></div>
<div class="t" style="right:498.5px;top:810.5px;font-size:15.2px;font-weight:bold;color:#111;">DID UNLAWFULLY COMMIT THE FOLLOWING OFFENSE.</div>
<div class="t" style="left:1445.5px;top:813.8px;font-size:10px;color:#222;">CHECK ONLY ONE OFFENSE EACH CITATION</div>
<div class="a" style="left:1050px;top:829.9px;width:612px;height:2.2px;background:#000"></div>
<div class="t" style="right:778.4px;top:841.3px;font-size:12.5px;color:#111;">UNLAWFUL SPEED</div>
<div class="a" style="left:1164.6px;top:855.5px;width:91.0px;height:1.6px;background:#000"></div>
<div class="t" style="left:1285.4px;top:841.3px;font-size:12.5px;color:#111;">MPH SPEED APPLICABLE</div>
<div class="a" style="left:1453.7px;top:855.5px;width:80.5px;height:1.6px;background:#000"></div>
<div class="t" style="left:1556.2px;top:841.3px;font-size:12.5px;color:#111;">MPH</div>
<div class="a" style="left:1037px;top:858.7px;width:19px;height:19px;border:2px solid #111"></div>
<div class="t" style="right:787.0px;top:862.3px;font-size:12.5px;color:#111;">INTERSTATE</div>
<div class="a" style="left:1165.3px;top:858.7px;width:19.3px;height:19.3px;border:2px solid #111"></div>
<div class="t" style="left:1187.3px;top:862.3px;font-size:12.5px;color:#111;">SCHOOL ZONE</div>
<div class="a" style="left:1312.5px;top:857px;width:19.3px;height:19.3px;border:2px solid #111"></div>
<div class="t" style="left:1334.5px;top:859.9px;font-size:12.5px;color:#111;">CONSTRUCTION WORKERS PRESENT )</div>
<div class="t" style="left:1055.2px;top:880.2px;font-size:12.5px;color:#111;">MEASUREMENT DEVICE:</div>
<div class="t" style="right:866.5px;top:880.2px;font-size:12.5px;color:#111;">O</div>
<!--/DOC-->
</div>
</div>
<svg style="left:0;top:0" width="1" height="1"><g fill="#c4c4c4">
<polygon points="1665,106.5 1670.5,101.5 1676,106.5"/>
<rect x="1664.5" y="114.5" width="12.5" height="8.5"/>
<polygon points="1665,896 1670.5,901 1676,896"/>
<polygon points="1059.5,910 1054.5,913.5 1059.5,917"/>
<rect x="1121" y="907" width="7.5" height="12"/>
<polygon points="1653.5,910 1658.5,913.5 1653.5,917"/>
</g></svg>
<div class="a" style="left:1065px;top:928.5px;width:72px;height:73px;background:#e6e6e6;border:1px solid #d2d2d2"></div>
<div class="a" style="left:1076px;top:930px;width:45px;height:58px;background:#fff;overflow:hidden">
<svg style="left:0;top:0" width="45" height="58"><g fill="#111">
<rect x="5" y="1" width="8" height="1.5" opacity=".7"/>
<rect x="1" y="4.4" width="20" height="17.5" rx="1"/>
<rect x="10" y="6" width="10" height="2" fill="#ddd"/><rect x="4" y="12" width="8" height="1.5" fill="#888"/><rect x="14" y="14" width="5" height="1" fill="#666"/>
<rect x="1" y="24.4" width="20" height="4.5" opacity=".35"/>
<rect x="1" y="30.4" width="20" height="4.8" opacity=".85"/><rect x="2" y="32" width="17" height="1" fill="#aaa"/>
<rect x="1" y="36" width="20" height="1" opacity=".5"/>
<rect x="1" y="38.5" width="20" height="2.3"/>
<rect x="5" y="45" width="16" height="1.2" opacity=".8"/><rect x="1" y="46.5" width="18" height=".8" opacity=".4"/>
<rect x="1" y="48.6" width="20" height="1.2" opacity=".75"/><rect x="1" y="51.3" width="20" height="1.2" opacity=".85"/><rect x="1" y="54.2" width="20" height="1.2" opacity=".9"/>
<rect x="11" y="56" width="33" height=".8" opacity=".35"/>
<rect x="22" y="6.3" width="20" height="39.3" rx="1.2" fill="none" stroke="#111" stroke-width="1.3"/>
<rect x="22" y="6.3" width="20" height="3"/>
<rect x="23.5" y="6.3" width="1.8" height="39.3"/>
<rect x="26" y="11" width="16" height="1.6" opacity=".7"/>
<rect x="28" y="13.5" width="14" height="4" opacity=".6"/>
<rect x="25" y="18.5" width="17" height="5.2" opacity=".85"/><rect x="26" y="19.5" width="8" height="1.2" fill="#bbb"/>
<rect x="26" y="24.5" width="16" height="4.4" opacity=".55"/>
<rect x="26" y="30" width="16" height="1.4" opacity=".8"/><rect x="28" y="33" width="14" height="1.4" opacity=".7"/>
<rect x="25" y="36.5" width="17" height="2.5" opacity=".9"/>
<rect x="26" y="41" width="10" height="3" opacity=".6"/><rect x="37" y="40.5" width="1" height="5"/>
</g></svg></div>
<div class="t" style="left:1095.5px;top:988.5px;color:#222;font-size:12px">1</div>
<div class="a" style="left:1024px;top:1023px;width:649px;height:1px;background:#d6d6d6"></div>
<div class="t" style="left:1012px;top:1030px;color:#3a38b8;font-size:14px;clip-path:inset(0 0 0 12px)">on - Original</div>
<div class="a" style="left:1660px;top:1036px;width:8px;height:4px;background:#c8c8c8"></div>

<div class="t" style="left:1767.8px;top:96.5px;color:#111;font-size:15.8px;font-weight:bold">Task Information</div>
<div class="t rp" style="left:1830.9px;top:122.5px;transform:translateX(-50%);letter-spacing:-0.35px">ALLEIGE | KWTRP</div>
<div class="t rp" style="left:1831px;top:141.5px;transform:translateX(-50%);letter-spacing:0.8px">Medium Priority</div>
<div class="t rp" style="left:1830.9px;top:160.5px;transform:translateX(-50%);letter-spacing:0.66px">E-Citation Queue</div>
<div class="rbtn" style="top:180.5px;height:23px"></div>
<div class="t" style="left:1797.8px;top:185px;color:#111;font-size:14.3px;letter-spacing:0.5px">Actions</div>
<div class="t" style="left:1745.5px;top:217.5px;color:#111;font-size:16px;font-weight:bold">Document Information</div>
<div class="t rp" style="left:1830.9px;top:244px;transform:translateX(-50%);letter-spacing:0.18px">CITATION FILED *</div>
<div class="t rp" style="left:1830.6px;top:262.5px;transform:translateX(-50%);letter-spacing:0.8px">Document 1 of 1</div>
<div class="t" style="left:1771.9px;top:289px;color:#c4c4c4;font-size:11px;letter-spacing:1.5px">&lt;&lt;</div>
<div class="t" style="left:1871.5px;top:289px;color:#c4c4c4;font-size:11px;letter-spacing:1.5px">&gt;&gt;</div>
<div class="rbtn" style="top:341px;height:22.5px"></div>
<div class="t" style="left:1803.3px;top:345.5px;color:#111;font-size:14.3px">Macros</div>
<div class="rbtn" style="top:384.5px;height:22.5px"></div>
<div class="t" style="left:1812.2px;top:388.5px;color:#111;font-size:14.3px">Scan</div>
<div class="a" style="left:1771.5px;top:410.7px;width:17px;height:17px;background:#fff;border:1px solid #c8c8c8"></div>
<div class="a" style="left:1775.3px;top:414.5px;width:10px;height:10px;background:#5a1f8e"></div>
<div class="t" style="left:1799.3px;top:411.5px;color:#333;font-size:14.8px">Display Options</div>
<div class="rbtn" style="top:438.5px;height:22px"></div>
<div class="t" style="left:1809.6px;top:442.5px;color:#111;font-size:14.3px">Save As</div>
<svg style="left:0;top:0" width="1" height="1"><g fill="none" stroke="#111" stroke-width="1.8">
<polyline points="1853,191.5 1858,196 1863,191.5"/>
<polyline points="1860,351.5 1865,356 1870,351.5"/>
<polyline points="1850,394.5 1855,399 1860,394.5"/>
</g></svg>
<div class="t" style="left:1749.2px;top:942.5px;color:#999;font-size:10px">A</div>
<div class="t" style="left:1749.2px;top:964.5px;color:#999;font-size:10px">X</div>
<div class="t rp" style="left:1766.2px;top:941.5px;color:#111">Apply</div>
<div class="t rp" style="left:1766.2px;top:963px;color:#111">Exit</div>
<div class="a" style="left:1739px;top:1001px;width:200px;height:24.5px;background:#e0e0e0;border-radius:5px"></div>
<div class="t" style="left:1747.4px;top:1007.5px;color:#222;font-size:12.6px">Enter selection...</div>

<!-- TASKBAR -->
<div class="a" id="tb" style="left:0;top:1040px;width:1920px;height:40px;background:#1c2a30"></div>

<svg style="left:0;top:0" width="1" height="1">
<g fill="#fff"><polygon points="16,1053.5 22,1052.6 22,1059.5 16,1059.5"/><polygon points="23,1052.4 32,1051 32,1059.5 23,1059.5"/><polygon points="16,1060.5 22,1060.5 22,1067.4 16,1066.5"/><polygon points="23,1060.5 32,1060.5 32,1069 23,1067.6"/></g>
</svg>
<div class="a" style="left:48px;top:1040px;width:288px;height:40px;background:#f0f0f0;border-bottom:1px solid #c8c8c8"></div>
<svg style="left:0;top:0" width="1" height="1"><g fill="none" stroke="#111" stroke-width="1.3"><circle cx="70.5" cy="1057.3" r="5.2"/><line x1="66.6" y1="1061.2" x2="60.3" y2="1067.6"/></g></svg>
<div class="t" style="left:88px;top:1052px;color:#222;font-size:14.6px">Type here to search</div>
<!-- taskbar icons -->
<svg style="left:0;top:0" width="1" height="1">
<!-- explorer -->
<path d="M352,1052 h7 l2,2 h12 v14.8 h-21 z" fill="#e9a93a"/>
<rect x="352" y="1055.5" width="21.8" height="13.3" rx="1" fill="#fcd35f"/>
<path d="M356,1065 v-4 h14 v4 h-3 v-1.5 h-8 v1.5 z" fill="#3d8fd6"/><rect x="359" y="1066" width="8" height="2.8" fill="#3d8fd6"/>
<!-- edge -->
<path d="M400,1060 a12,12 0 0 1 24,-1 c0,5 -4,7 -7,6 c-3,-1 -2,-4 0,-5 c-3,-5 -12,-3 -12,4 c0,5 5,8 10,8 a12,12 0 0 1 -15,-12 z" fill="#1fa0d8"/>
<path d="M404,1052 a12,12 0 0 1 20,7 c0,5 -4,6 -6,5" fill="#4cd36c" opacity=".9"/>
<rect x="400" y="1062" width="11" height="9.5" rx="1" fill="#c98a2a"/><rect x="403.5" y="1060" width="4" height="2.5" fill="none" stroke="#c98a2a" stroke-width="1.2"/>
<!-- outlook -->
<rect x="455" y="1049" width="18" height="16" fill="#1a73c8"/><rect x="464" y="1049" width="9" height="8" fill="#31a5f0"/>
<path d="M455,1059 l9,6 l9,-6 v12 h-18 z" fill="#28a8ea"/>
<rect x="448.5" y="1054" width="12.5" height="12.5" rx="1" fill="#0f64c0"/><text x="454.8" y="1064" font-family="Liberation Sans" font-weight="bold" font-size="10" fill="#fff" text-anchor="middle">O</text>
<!-- excel -->
<rect x="504" y="1049" width="18.5" height="21.5" rx="1" fill="#1d9f5c"/><rect x="513" y="1049" width="9.5" height="10" fill="#33c481"/><rect x="504" y="1063" width="18.5" height="7.5" fill="#107c41"/>
<rect x="498" y="1054" width="12.5" height="12.5" rx="1" fill="#107c41"/><text x="504.3" y="1064" font-family="Liberation Sans" font-weight="bold" font-size="10" fill="#fff" text-anchor="middle">X</text>
<!-- calculator -->
<rect x="550" y="1048.2" width="18.5" height="23.5" rx="1.5" fill="#6f7477"/><rect x="552" y="1050" width="14.5" height="4" fill="#4fc3f7"/>
<g fill="#dfe3e6"><rect x="552" y="1056" width="3.2" height="3.2"/><rect x="556.5" y="1056" width="3.2" height="3.2"/><rect x="561" y="1056" width="3.2" height="3.2"/><rect x="552" y="1060.5" width="3.2" height="3.2"/><rect x="556.5" y="1060.5" width="3.2" height="3.2"/><rect x="552" y="1065" width="3.2" height="3.2"/><rect x="556.5" y="1065" width="3.2" height="3.2"/></g>
<rect x="561" y="1060.5" width="3.5" height="8" fill="#1d3f78"/>
</svg>
<div class="a" style="left:584px;top:1040px;width:44px;height:40px;background:#3d4a4f"></div>
<div class="a" style="left:628px;top:1040px;width:4px;height:40px;background:#2e3a3f"></div>
<svg style="left:0;top:0" width="1" height="1">
<rect x="596" y="1048" width="24.2" height="24" fill="#0d57a6"/>
<g fill="#fff"><circle cx="598.5" cy="1058" r="1.3"/><circle cx="601.5" cy="1061" r="1.3"/><circle cx="604.5" cy="1058" r="1.3"/><circle cx="604.5" cy="1064" r="1.3"/><circle cx="607.5" cy="1061" r="1.3"/><circle cx="607.5" cy="1055" r="1.3"/><circle cx="610.5" cy="1052" r="1.3"/><circle cx="610.5" cy="1058" r="1.3"/><circle cx="610.5" cy="1064" r="1.3"/><circle cx="607.5" cy="1067" r="1.3"/><circle cx="613.5" cy="1061" r="1.3"/><circle cx="616.5" cy="1064" r="1.3"/><circle cx="613.5" cy="1055" r="1.3"/><circle cx="604.5" cy="1070" r="1.1"/></g>
<!-- word -->
<rect x="651" y="1049" width="18" height="21.5" rx="1" fill="#2b7cd3"/><rect x="651" y="1049" width="18" height="5.5" fill="#41a5ee"/><rect x="651" y="1060" width="18" height="5" fill="#185abd"/><rect x="651" y="1065" width="18" height="5.5" fill="#103f91"/>
<rect x="645" y="1054" width="12.5" height="12.5" rx="1" fill="#185abd"/><text x="651.3" y="1064" font-family="Liberation Sans" font-weight="bold" font-size="9.5" fill="#fff" text-anchor="middle">W</text>
<!-- chrome -->
<circle cx="706" cy="1059.7" r="12.2" fill="#db4437"/>
<path d="M706,1059.7 L695.4,1065.8 A12.2,12.2 0 0 1 696,1052 Z" fill="#0f9d58"/>
<path d="M706,1059.7 L695.4,1065.8 A12.2,12.2 0 0 0 708,1071.8 Z" fill="#0f9d58"/>
<path d="M706,1059.7 L716.6,1053.6 A12.2,12.2 0 0 1 706,1071.9 Z" fill="#f4b400"/>
<circle cx="706" cy="1059.7" r="5.3" fill="#fff"/><circle cx="706" cy="1059.7" r="4.2" fill="#4285f4"/>
<!-- teams -->
<circle cx="756" cy="1052.5" r="3.5" fill="#7b83eb"/><circle cx="762.5" cy="1053.5" r="2.5" fill="#5059c9"/>
<rect x="746" y="1056" width="18" height="13" rx="2" fill="#5059c9"/>
<rect x="743" y="1054" width="11.5" height="11.5" rx="1" fill="#4b53bc"/><text x="748.8" y="1063.5" font-family="Liberation Sans" font-weight="bold" font-size="9" fill="#fff" text-anchor="middle">T</text>
<circle cx="761" cy="1066" r="8" fill="#d13438"/>
</svg>
<div class="a" style="left:780px;top:1040px;width:48px;height:40px;background:#a2612a"></div>
<div class="a" style="left:826px;top:1040px;width:2px;height:40px;background:#8f5222"></div>
<svg style="left:0;top:0" width="1" height="1">
<rect x="793" y="1049" width="22" height="22" rx="1.5" fill="#fcd116"/>
<path d="M804,1071 L815,1060 V1069.5 a1.5,1.5 0 0 1 -1.5,1.5 Z" fill="#e0a800"/>
<path d="M804,1071 L815,1060 H804 Z" fill="#3a3a3a"/>
<!-- Q app -->
<rect x="842.7" y="1049" width="20.5" height="20.5" rx="4" fill="#3b1a8f"/>
<path d="M853,1053.5 a5.2,5.2 0 1 0 0.1,0 z" fill="none" stroke="#fff" stroke-width="2.5"/><path d="M854,1060 l4,6" stroke="#e8d8ff" stroke-width="2.6"/>
</svg>
<div class="a" style="left:343px;top:1078px;width:40px;height:2px;background:#76b9ed"></div>
<div class="a" style="left:584px;top:1078px;width:44px;height:2px;background:#76b9ed"></div>
<div class="a" style="left:637px;top:1078px;width:40px;height:2px;background:#76b9ed"></div>
<div class="a" style="left:735px;top:1078px;width:40px;height:2px;background:#76b9ed"></div>
<div class="a" style="left:780px;top:1078px;width:48px;height:2px;background:#f7630c"></div>
<div class="a" style="left:833px;top:1078px;width:40px;height:2px;background:#76b9ed"></div>
<!-- tray -->
<svg style="left:0;top:0" width="1" height="1">
<g fill="none" stroke="#fff" stroke-width="1.3">
<polyline points="1689.5,1063.5 1695,1058 1700.5,1063.5"/>
<rect x="1714" y="1052" width="6.5" height="11" rx="3.2"/><path d="M1712,1060 a6,6 0 0 0 11,0 M1717.3,1066 v2.5 M1714.5,1068.5 h5.5"/>
<rect x="1735.5" y="1054.5" width="13" height="9"/><path d="M1742,1063.5 v3 M1738.5,1066.5 h7" /><rect x="1734.5" y="1053.5" width="4" height="3" fill="#1c2a30"/>
<path d="M1760,1058 h3 l4,-4 v13 l-4,-4 h-3 z M1770,1057.5 a4,4 0 0 1 0,6 M1772.5,1055 a7.5,7.5 0 0 1 0,11 M1775,1052.5 a11,11 0 0 1 0,16"/>
<path d="M1880.5,1052.5 h15 v12 h-5 l-2.5,2.5 l-2.5,-2.5 h-5 z"/>
</g>
<path d="M1783.5,1066 a3.5,3.5 0 0 1 0.5,-7 a5.5,5 0 0 1 9.5,-1.5 a4,4 0 0 1 5,3.5 a3,3 0 0 1 0,5 z" fill="#1f8ee6"/>
<path d="M1786,1066 l4.5,-5 l9,3.5 v1.5 z" fill="#34a5f5"/>
</svg>
<div class="t" style="left:1810px;top:1046px;color:#fff;font-size:12px">11:19 AM</div>
<div class="t" style="left:1808px;top:1064.5px;color:#fff;font-size:12px">7/16/2025</div>
<div class="a" style="left:1915px;top:1040px;width:1px;height:40px;background:#5a666b"></div>

</body></html>
